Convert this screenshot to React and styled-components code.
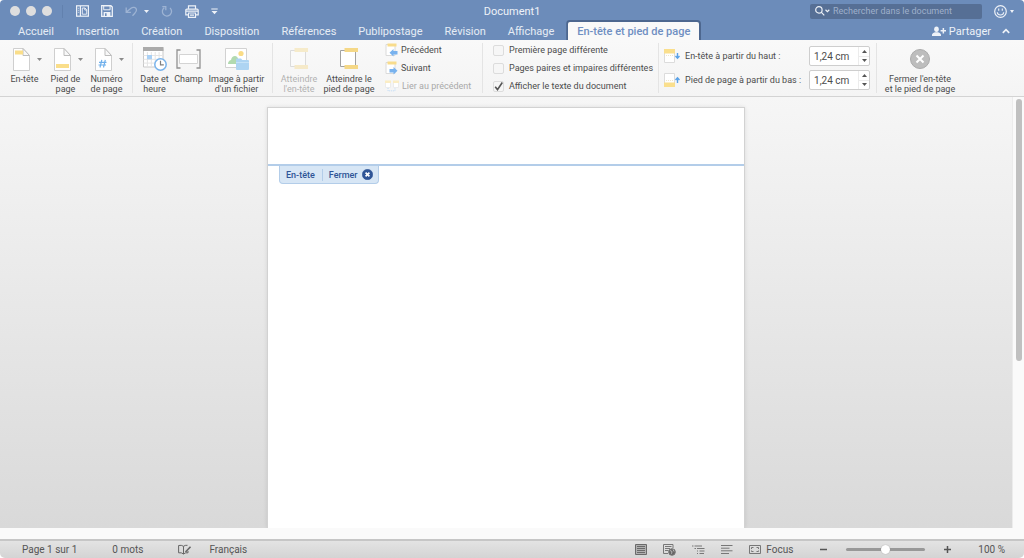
import React, { useState } from 'react';
import styled, { createGlobalStyle, css } from 'styled-components';

const sans = `Roboto, "Liberation Sans", sans-serif`;

const Global = createGlobalStyle`
  *, *::before, *::after { box-sizing: border-box; }
  body { margin: 0; background: #fff; font-family: ${sans}; }
  button, input { font: inherit; color: inherit; }
  button { border: 0; padding: 0; margin: 0; background: none; }
  svg { display: block; flex: none; }
`;

const Window = styled.div`
  display: flex;
  flex-direction: column;
  min-height: 100vh;
  border-radius: 4px 4px 5px 5px;
  overflow: hidden;
  background: #fafafa;
`;

/* ---------- Title bar ---------- */
const TitleBar = styled.header`
  display: grid;
  grid-template-columns: 1fr auto 1fr;
  align-items: center;
  height: 22px;
  background: #6c8cba;
  color: #eef2f8;
`;
const TitleLeft = styled.div`
  display: flex;
  align-items: center;
  padding-left: 10px;
`;
const Lights = styled.div`
  display: flex;
  gap: 6px;
  padding-right: 10px;
  margin-right: 13px;
  border-right: 1px solid #6281ae;
  height: 13px;
  align-items: center;
`;
const Light = styled.button`
  width: 10px;
  height: 10px;
  border-radius: 50%;
  background: #dedede;
`;
const QuickTools = styled.div`
  display: flex;
  align-items: center;
  gap: 12px;
`;
const ToolButton = styled.button`
  display: flex;
  align-items: center;
  gap: ${(p) => p.$gap || 0}px;
  color: ${(p) => (p.$dim ? '#9db3d3' : '#eef2f8')};
`;
const Title = styled.h1`
  margin: 0;
  padding-top: 2px;
  font-size: 11px;
  line-height: 14px;
  font-weight: 400;
`;
const TitleRight = styled.div`
  display: flex;
  align-items: center;
  justify-content: flex-end;
  gap: 12px;
  padding-right: 10px;
`;
const Search = styled.label`
  display: flex;
  align-items: center;
  gap: 3px;
  width: 172px;
  height: 15px;
  padding-left: 5px;
  border-radius: 2px;
  background: #566f95;
`;
const SearchInput = styled.input`
  flex: 1;
  min-width: 0;
  border: 0;
  padding: 0;
  outline: 0;
  background: none;
  font-size: 9px;
  line-height: 14px;
  &::placeholder { color: #9fb0cb; opacity: 1; }
`;

/* ---------- Tabs ---------- */
const TabBar = styled.nav`
  display: flex;
  align-items: stretch;
  height: 18px;
  padding: 0 14px 0 7px;
  background: #6c8cba;
  color: #e6ecf5;
`;
const Tab = styled.button`
  padding: 0 11px;
  font-size: 11px;
  line-height: 17px;
  white-space: nowrap;
  ${(p) => p.$active && css`
    margin-left: 3px;
    padding: 0 9px;
    background: #f9f9f9;
    color: #6f8fc2;
    font-weight: 500;
    border-radius: 2px 2px 0 0;
    box-shadow: 0 0 0 2px #4d678f;
    clip-path: inset(-2px -2px 0 -2px);
  `}
`;
const ShareArea = styled.div`
  display: flex;
  align-items: center;
  gap: 11px;
  margin-left: auto;
  font-size: 11px;
`;

/* ---------- Ribbon ---------- */
const Ribbon = styled.section`
  display: flex;
  height: 57px;
  padding: 3px 0;
  background: linear-gradient(#f9f9f9, #f4f4f4);
  border-bottom: 1px solid #d3d3d3;
  font-size: 9px;
  line-height: 10px;
  color: #4c4c4c;
`;
const Group = styled.div`
  display: flex;
  min-width: ${(p) => p.$w || 0}px;
  padding: ${(p) => p.$pad || '0 4px'};
  border-right: ${(p) => (p.$last ? 0 : '1px solid #e4e4e4')};
`;
const BigButton = styled.button`
  display: flex;
  flex-direction: column;
  align-items: center;
  justify-content: flex-start;
  gap: 3px;
  width: ${(p) => p.$w}px;
  padding-top: 4px;
  white-space: nowrap;
  opacity: ${(p) => (p.disabled ? 0.4 : 1)};
`;
const IconRow = styled.span`
  display: flex;
  flex: none;
  align-items: center;
  gap: 7px;
  height: 24px;
  padding-left: ${(p) => (p.$menu ? 5 : 0)}px;
`;
const Stack = styled.div`
  display: flex;
  flex-direction: column;
  gap: ${(p) => p.$gap}px;
  margin-left: ${(p) => p.$indent || 0}px;
`;
const SmallButton = styled.button`
  display: flex;
  align-items: center;
  gap: 3px;
  height: 14px;
  white-space: nowrap;
  color: ${(p) => (p.disabled ? '#a9a9a9' : '#4c4c4c')};
`;
const CheckLabel = styled.label`
  display: flex;
  align-items: center;
  gap: 5px;
  height: 14px;
  white-space: nowrap;
`;
const CheckWrap = styled.span`
  display: grid;
  width: 11px;
  height: 11px;
  & > * { grid-area: 1 / 1; }
`;
const CheckBox = styled.input`
  appearance: none;
  width: 11px;
  height: 11px;
  margin: 0;
  border: 1px solid #dcdcdc;
  border-radius: 2px;
  background: #f6f6f6;
  & + svg { visibility: hidden; pointer-events: none; }
  &:checked + svg { visibility: visible; }
`;
const MeasureRow = styled.div`
  display: flex;
  align-items: center;
  width: 206px;
  height: 20px;
  gap: 5px;
  white-space: nowrap;
`;
const Spin = styled.div`
  display: flex;
  width: 61px;
  height: 20px;
  margin-left: auto;
  border: 1px solid #cecece;
  border-radius: 2px;
  background: #fff;
`;
const SpinInput = styled.input`
  flex: 1;
  min-width: 0;
  border: 0;
  outline: 0;
  padding: 0 0 0 4px;
  background: none;
  font-size: 10px;
`;
const SpinArrows = styled.div`
  display: flex;
  flex-direction: column;
  width: 11px;
  border-left: 1px solid #ececec;
  & > button {
    flex: 1;
    display: grid;
    place-items: center;
  }
  & > button + button { border-top: 1px solid #ececec; }
`;

/* ---------- Document ---------- */
const Workspace = styled.main`
  display: flex;
  flex: 1;
`;
const Canvas = styled.div`
  display: flex;
  flex: 1;
  justify-content: center;
  padding-top: 10px;
  background: linear-gradient(#f6f6f6, #d9d9d9);
`;
const Page = styled.article`
  width: 478px;
  background: #fff;
  border: 1px solid #d2d2d2;
  border-bottom: 0;
  box-shadow: 0 0 4px rgba(0, 0, 0, 0.1);
`;
const HeaderZone = styled.div`
  height: 58px;
  border-bottom: 2px solid #b3cde9;
`;
const ZoneTag = styled.div`
  display: inline-flex;
  align-items: center;
  height: 18px;
  margin-left: 11px;
  padding: 0 5px 0 6px;
  border: 1px solid #b3cde9;
  border-top: 0;
  border-radius: 0 0 4px 4px;
  background: #d7e6f5;
  color: #2f5597;
  font-size: 9px;
  line-height: 12px;
  font-weight: 500;
  vertical-align: top;
`;
const ZoneClose = styled.button`
  display: flex;
  align-items: center;
  gap: 4px;
  margin-left: 7px;
  padding-left: 6px;
  border-left: 1px solid #b3cde9;
`;
const ScrollTrack = styled.div`
  width: 12px;
  padding: 2px 2px 0 3px;
  background: #fafafa;
  border-left: 1px solid #ececec;
`;
const ScrollThumb = styled.div`
  width: 6px;
  height: 61%;
  border-radius: 3px;
  background: #c0c0c0;
`;
const BottomGutter = styled.div`
  height: 11px;
  background: #fafafa;
`;

/* ---------- Status bar ---------- */
const StatusBar = styled.footer`
  display: flex;
  align-items: center;
  justify-content: space-between;
  height: 19px;
  padding: 0 19px 0 22px;
  border-top: 2px solid #c6c6c6;
  background: linear-gradient(#e3e3e3, #d4d4d4);
  color: #555;
  font-size: 10px;
  line-height: 14px;
`;
const StatusSide = styled.div`
  display: flex;
  align-items: center;
  gap: ${(p) => p.$gap}px;
`;
const StatusButton = styled.button`
  display: flex;
  align-items: center;
  gap: 5px;
  white-space: nowrap;
`;
const Zoom = styled.div`
  display: flex;
  align-items: center;
  gap: 19px;
  margin: 0 11px;
`;
const Range = styled.input`
  appearance: none;
  width: 79px;
  height: 10px;
  margin: 0;
  background: none;
  &::-webkit-slider-runnable-track {
    height: 3px;
    border-radius: 2px;
    background: #989898;
  }
  &::-webkit-slider-thumb {
    appearance: none;
    width: 9px;
    height: 9px;
    margin-top: -3px;
    border-radius: 50%;
    background: #fff;
    box-shadow: 0 0 1px #888;
  }
`;

/* ---------- Icons ---------- */
const Caret = ({ w = 5, h = 4, color = 'currentColor', up }) => (
  <svg width={w} height={h} viewBox="0 0 6 4" preserveAspectRatio="none" aria-hidden="true">
    <path d={up ? 'M0 4h6L3 0z' : 'M0 0h6L3 4z'} fill={color} />
  </svg>
);
const PanelIcon = () => (
  <svg width="13" height="12" viewBox="0 0 13 12" fill="none" stroke="currentColor">
    <rect x=".6" y=".8" width="11.8" height="10.4" strokeWidth="1.2" />
    <path d="M4.400 1v10" strokeWidth="1.200" />
    <path d="M1.800 3.300h1.400M1.800 5.300h1.400M1.800 7.300h1.400" strokeWidth=".7" />
    <path d="M6.300 3h2.700l1.700 1.700v4.500H6.300zM8.800 3v2h2" strokeWidth=".9" />
  </svg>
);
const SaveIcon = () => (
  <svg width="12" height="12" viewBox="0 0 12 12">
    <path d="M.7.7h9.2l1.4 1.4v9.2H.7z" fill="none" stroke="currentColor" strokeWidth="1.3" />
    <path d="M2.7.8h6.4v4H2.7z" fill="none" stroke="currentColor" />
    <path d="M2.6 7h6.8v4.4H2.6z" fill="currentColor" />
    <path d="M4 8.3h1.6v2.8H4z" fill="#6c8cba" />
  </svg>
);
const UndoIcon = () => (
  <svg width="13" height="11" viewBox="0 0 13 11" fill="none" stroke="currentColor" strokeWidth="1.3">
    <path d="M1.2 1.6v4.7h4.7M1.4 6.1 6 2.2c2-1.5 4.8-.9 5.4 1 .5 1.6-.2 2.7-1.6 4L7.500 9.800" />
  </svg>
);
const RedoIcon = () => (
  <svg width="12" height="12" viewBox="0 0 12 12" fill="none" stroke="currentColor" strokeWidth="1.3">
    <path d="M3.300 2.700A4.600 4.600 0 1 0 9 3M1.300 1.700h3.500v3.500" />
  </svg>
);
const PrintIcon = () => (
  <svg width="14" height="13" viewBox="0 0 14 13" fill="none" stroke="currentColor" strokeWidth="1.200">
    <path d="M3.500 4V.8h7V4M3.300 9.800H.8V5.300q0-1.100 1.100-1.100h10.200q1.100 0 1.100 1.100v4.500h-2.500M1 6.200h12" />
    <path d="M3.500 8h7v4.300h-7zM5 10.100h4" />
  </svg>
);
const MoreIcon = () => (
  <svg width="7" height="7" viewBox="0 0 7 7" fill="currentColor">
    <path d="M.3.500h6.400v1H.3zM.5 3h6L3.500 6.200z" />
  </svg>
);
const SearchIcon = () => (
  <svg width="15" height="10" viewBox="0 0 15 10" fill="none" stroke="currentColor" strokeWidth="1.200">
    <circle cx="3.900" cy="3.900" r="3.200" />
    <path d="m6.200 6.200 3.100 3.100M10.500 3.800l1.900 1.800 1.900-1.800" />
  </svg>
);
const SmileIcon = () => (
  <svg width="13" height="13" viewBox="0 0 13 13" fill="none" stroke="currentColor">
    <circle cx="6.500" cy="6.500" r="5.800" strokeWidth="1.200" />
    <path d="M3.300 7.300c.4 3.600 6 3.600 6.400 0M4.700 3.500v2.200M8.300 3.500v2.200" strokeWidth="1.100" />
  </svg>
);
const ShareIcon = () => (
  <svg width="14" height="11" viewBox="0 0 14 11" fill="currentColor">
    <ellipse cx="4.500" cy="3.200" rx="2.300" ry="2.700" />
    <path d="M0 10V8.600C.3 7.200 2 6.700 3.200 6.300h2.600C7 6.700 8.700 7.200 9 8.600V10zM10.600 2h1.500v2H14v1.500h-1.900v2h-1.500v-2h-2V4h2z" />
  </svg>
);
const ChevronUp = () => (
  <svg width="8" height="6" viewBox="0 0 8 6" fill="none" stroke="currentColor" strokeWidth="1.700">
    <path d="m.8 4.800 3.200-3.200 3.200 3.200" />
  </svg>
);
const DocIcon = ({ kind }) => (
  <svg width="17" height="23" viewBox="0 0 17 23">
    <path d="M.5.500h9.500l6.500 7v15H.5z" fill="#fff" stroke="#cfcfcf" />
    <path d="M10 .5v7h6.500z" fill="#f8f8f8" stroke="#bdbdbd" />
    {kind === 'top' && <path d="M2 2.500h8v4H2z" fill="#fade8a" />}
    {kind === 'bottom' && <path d="M2 16h13v4H2z" fill="#fade8a" />}
    {kind === 'number' && <path d="M6.800 11.800 5 19.500M10.300 11.800 8.500 19.500M4 14.300h7.500M3.500 17h7.500" stroke="#6fb0ec" strokeWidth="1.200" />}
  </svg>
);
const DateIcon = () => (
  <svg width="24" height="24" viewBox="0 0 24 24">
    <path d="M.5 1.500h19.500V20H.5z" fill="#fff" stroke="#c9c9c9" />
    <path d="M.5 8.500H20M.5 12.300H20M.5 16.100H20M4.400 5v15M8.300 5v15M12.200 5v15M16.100 5v15" stroke="#e4e4e4" />
    <path d="M0 0h20.500v4H0z" fill="#aaa" />
    <path d="M4 8h5v4.300H4z" fill="#a9d0f5" />
    <circle cx="17.500" cy="17.500" r="5.700" fill="#fff" stroke="#78b3ec" strokeWidth="1.500" />
    <path d="M17.500 13.800v4h3.300" fill="none" stroke="#808080" strokeWidth="1.200" />
  </svg>
);
const FieldIcon = () => (
  <svg width="25" height="20" viewBox="0 0 25 20" fill="none">
    <path d="M4.500 1H1v18h3.500M20.500 1H24v18h-3.500" stroke="#919191" strokeWidth="1.300" />
    <path d="M3.500 5.500h18v9h-18z" fill="#fff" stroke="#d4d4d4" />
  </svg>
);
const ImageIcon = () => (
  <svg width="24" height="22" viewBox="0 0 24 22">
    <path d="M.5.500h21v19H.5z" fill="#fff" stroke="#d2d2d2" />
    <circle cx="16" cy="5.500" r="2.600" fill="#fadc86" />
    <path d="M3 16c0-2 1-3.500 3-4 .5-2.500 2-4 4-4 1.500 0 2.500 1 3 2.500V16z" fill="#b2dab0" />
    <path d="M11 11.500q0-1 1-1h4l1.300 1.500H23q1 0 1 1v8q0 1-1 1H12q-1 0-1-1z" fill="#add4f2" />
    <path d="M11 14h13v1H11z" fill="#c5e2f7" />
  </svg>
);
const GotoIcon = ({ footer }) => (
  <svg width="18" height="22" viewBox="0 0 18 22">
    <path d="M.5 2.500h15v16H.5z" fill="#fff" stroke={footer ? '#a2a2a2' : '#b4b4b4'} />
    <path d="M4.500 0H18v4H4.500zM4.500 17H18v4H4.500z" fill="#f5d887" />
  </svg>
);
const StepIcon = ({ next }) => (
  <svg width="13" height="14" viewBox="0 0 13 14">
    <path d="M1 1.500h9v11H1z" fill="#fff" stroke="#dadada" />
    <path d="M2.500.500h9v3h-9z" fill="#f8dc8c" />
    <path d={next ? 'M4.500 8h4V6l4 3.700-4 3.700v-2h-4z' : 'M12.500 8h-4V6L4.500 9.700l4 3.700v-2h4z'} fill="#78b2ee" />
  </svg>
);
const LinkIcon = () => (
  <svg width="14" height="12" viewBox="0 0 14 12">
    <path d="M.5 1.500h5v6h-5zM8.500 1.500h5v6h-5z" fill="#fff" stroke="#ececec" />
    <path d="M0 .5h6v2.500H0zM8 .5h6v2.500H8z" fill="#fbedc4" />
    <path d="M3 8v2.800h7V8" fill="none" stroke="#bcdaf6" strokeDasharray="1 1" />
  </svg>
);
const MarginIcon = ({ up }) => (
  <svg width="16" height="14" viewBox="0 0 16 14">
    <path d="M.5.500h10v13H.5z" fill="#fff" stroke="#dcdcdc" />
    <path d={up ? 'M0 9.500h11V14H0z' : 'M0 0h11v4.500H0z'} fill="#fadf8d" />
    <path d={up ? 'M2 7.500h7' : 'M2 6.500h7'} stroke="#f0e6c8" strokeDasharray="1 1" />
    <path d={up ? 'M13.500 10V5M11.500 7l2-2.300 2 2.300' : 'M13.500 4v5M11.500 7l2 2.300 2-2.300'} fill="none" stroke="#5aa2e8" strokeWidth="1.400" />
  </svg>
);
const CheckMark = () => (
  <svg width="11" height="11" viewBox="0 0 11 11">
    <path d="m2.200 5.800 2.300 2.800L9.300 1.500" fill="none" stroke="#555" strokeWidth="1.600" />
  </svg>
);
const CloseIcon = ({ size, bg, ring }) => (
  <svg width={size} height={size} viewBox="0 0 20 20">
    <circle cx="10" cy="10" r="9.500" fill={bg} stroke={ring || bg} />
    <path d="m6.500 6.500 7 7m0-7-7 7" stroke="#fff" strokeWidth={size > 15 ? 2 : 3} />
  </svg>
);
const ProofIcon = () => (
  <svg width="14" height="12" viewBox="0 0 14 12" fill="none" stroke="#666">
    <path d="M5.500 2.300Q3.500.800.6 1.500v7.300q3-.5 4.900 1.200Q7.500 8.300 10 8.800V7M5.500 2.300V10M5.500 2.300Q7 1 9.500 1.300" />
    <path d="m7.500 8 5-5.300" strokeWidth="1.600" />
  </svg>
);
const PrintLayoutIcon = () => (
  <svg width="12" height="11" viewBox="0 0 12 11" fill="none" stroke="#6a6a6a">
    <path d="M.5.500h11v10H.5z" fill="#b0b0b0" />
    <path d="M2 2.500h8M2 4.500h8M2 6.500h8M2 8.500h8" />
  </svg>
);
const WebLayoutIcon = () => (
  <svg width="13" height="12" viewBox="0 0 13 12" fill="none" stroke="#777">
    <path d="M.5 9.500v-9h9.500v3.500M.5 9.500H5M2 2.500h6.500M2 4.500h5M2 6.500h3.500" />
    <circle cx="9" cy="8" r="3.300" fill="#666" />
    <path d="M7 6.500 9 7.500l-.5 2.300M10 5.500l1 2" stroke="#ccc" strokeWidth=".8" />
  </svg>
);
const OutlineIcon = () => (
  <svg width="13" height="10" viewBox="0 0 13 10" stroke="#777">
    <path d="M0 1h1.500M2.500 1H10M2.500 3.500H4M5 3.500h7.500M5 6h1M7.500 6h5M5 8.500h1M7.500 8.500h4.500" />
  </svg>
);
const DraftIcon = () => (
  <svg width="12" height="9" viewBox="0 0 12 9" stroke="#777">
    <path d="M0 .500h11.500M0 3.200h8.500M0 5.800h11.500M0 8.500h8" />
  </svg>
);
const FocusIcon = () => (
  <svg width="12" height="9" viewBox="0 0 12 9" fill="none" stroke="#777">
    <path d="M.5.500h11v8H.5z" />
    <path d="M2.500 4V2.500h2M7.500 2.500h2V4M9.500 5.500v1h-2M4.500 6.500h-2v-1" />
  </svg>
);
const SignIcon = ({ plus }) => (
  <svg width="7" height="7" viewBox="0 0 7 7" stroke="#555" strokeWidth="1.500">
    <path d={plus ? 'M0 3.500h7M3.500 0v7' : 'M0 3.500h7'} />
  </svg>
);

/* ---------- Composite controls ---------- */
const RibbonButton = ({ icon, lines, width, menu, disabled }) => (
  <BigButton $w={width} disabled={disabled}>
    <IconRow $menu={menu}>
      {icon}
      {menu && <Caret h={3} color="#8a8a8a" />}
    </IconRow>
    <span>
      {lines.map((l, i) => (
        <React.Fragment key={l}>{i > 0 && <br />}{l}</React.Fragment>
      ))}
    </span>
  </BigButton>
);

const Option = ({ label, checked }) => (
  <CheckLabel>
    <CheckWrap>
      <CheckBox type="checkbox" defaultChecked={checked} />
      <CheckMark />
    </CheckWrap>
    {label}
  </CheckLabel>
);

const Measure = ({ id, label, up }) => {
  const [value, setValue] = useState(124);
  const text = `${(value / 100).toFixed(2).replace('.', ',')} cm`;
  return (
    <MeasureRow>
      <MarginIcon up={up} />
      <label htmlFor={id}>{label}</label>
      <Spin>
        <SpinInput id={id} type="text" value={text} readOnly />
        <SpinArrows>
          <button aria-label="Augmenter" onClick={() => setValue(value + 10)}><Caret up h={3} color="#555" /></button>
          <button aria-label="Diminuer" onClick={() => setValue(Math.max(0, value - 10))}><Caret h={3} color="#555" /></button>
        </SpinArrows>
      </Spin>
    </MeasureRow>
  );
};

const tabs = ['Accueil', 'Insertion', 'Création', 'Disposition', 'Références', 'Publipostage', 'Révision', 'Affichage', 'En-tête et pied de page'];

export default function App() {
  return (
    <>
      <Global />
      <Window>
        <TitleBar>
          <TitleLeft>
            <Lights>
              <Light aria-label="Fermer la fenêtre" />
              <Light aria-label="Réduire" />
              <Light aria-label="Agrandir" />
            </Lights>
            <QuickTools>
              <ToolButton aria-label="Volet"><PanelIcon /></ToolButton>
              <ToolButton aria-label="Enregistrer"><SaveIcon /></ToolButton>
              <ToolButton aria-label="Annuler" $dim $gap={6}><UndoIcon /><Caret h={3} color="#eef2f8" /></ToolButton>
              <ToolButton aria-label="Rétablir" $dim><RedoIcon /></ToolButton>
              <ToolButton aria-label="Imprimer"><PrintIcon /></ToolButton>
              <ToolButton aria-label="Personnaliser"><MoreIcon /></ToolButton>
            </QuickTools>
          </TitleLeft>
          <Title>Document1</Title>
          <TitleRight>
            <Search>
              <SearchIcon />
              <SearchInput type="text" placeholder="Rechercher dans le document" aria-label="Rechercher dans le document" />
            </Search>
            <ToolButton aria-label="Commentaires" $gap={3}><SmileIcon /><Caret w={4} h={3} /></ToolButton>
          </TitleRight>
        </TitleBar>

        <TabBar>
          {tabs.map((t, i) => <Tab key={t} $active={i === tabs.length - 1}>{t}</Tab>)}
          <ShareArea>
            <ToolButton $gap={3}><ShareIcon />Partager</ToolButton>
            <ToolButton aria-label="Réduire le ruban"><ChevronUp /></ToolButton>
          </ShareArea>
        </TabBar>

        <Ribbon>
          <Group $w={133} $pad="0 5px 0 4px">
            <RibbonButton width={41} menu icon={<DocIcon kind="top" />} lines={['En-tête']} />
            <RibbonButton width={41} menu icon={<DocIcon kind="bottom" />} lines={['Pied de', 'page']} />
            <RibbonButton width={41} menu icon={<DocIcon kind="number" />} lines={['Numéro', 'de page']} />
          </Group>
          <Group $w={140} $pad="0 4px">
            <RibbonButton width={35} icon={<DateIcon />} lines={['Date et', 'heure']} />
            <RibbonButton width={33} icon={<FieldIcon />} lines={['Champ']} />
            <RibbonButton width={63} icon={<ImageIcon />} lines={['Image à partir', "d'un fichier"]} />
          </Group>
          <Group $w={210} $pad="0 4px">
            <RibbonButton width={44} disabled icon={<GotoIcon />} lines={['Atteindre', "l'en-tête"]} />
            <RibbonButton width={56} icon={<GotoIcon footer />} lines={['Atteindre le', 'pied de page']} />
            <Stack $gap={4} $indent={8}>
              <SmallButton><StepIcon />Précédent</SmallButton>
              <SmallButton><StepIcon next />Suivant</SmallButton>
              <SmallButton disabled><LinkIcon />Lier au précédent</SmallButton>
            </Stack>
          </Group>
          <Group $w={176} $pad="0 5px 0 10px">
            <Stack $gap={4}>
              <Option label="Première page différente" />
              <Option label="Pages paires et impaires différentes" />
              <Option label="Afficher le texte du document" checked />
            </Stack>
          </Group>
          <Group $w={218} $pad="3px 5px">
            <Stack $gap={4}>
              <Measure id="top" label="En-tête à partir du haut :" />
              <Measure id="bottom" label="Pied de page à partir du bas :" up />
            </Stack>
          </Group>
          <Group $pad="0 4px" $last>
            <RibbonButton width={78} icon={<CloseIcon size={20} bg="#bdbdbd" ring="#ababab" />} lines={["Fermer l'en-tête", 'et le pied de page']} />
          </Group>
        </Ribbon>

        <Workspace>
          <Canvas>
            <Page>
              <HeaderZone />
              <ZoneTag>
                En-tête
                <ZoneClose>Fermer<CloseIcon size={11} bg="#2f5597" /></ZoneClose>
              </ZoneTag>
            </Page>
          </Canvas>
          <ScrollTrack><ScrollThumb /></ScrollTrack>
        </Workspace>
        <BottomGutter />

        <StatusBar>
          <StatusSide $gap={35}>
            <span>Page 1 sur 1</span>
            <span>0 mots</span>
            <StatusSide $gap={17}>
              <StatusButton aria-label="Vérification"><ProofIcon /></StatusButton>
              <StatusButton>Français</StatusButton>
            </StatusSide>
          </StatusSide>
          <StatusSide $gap={16}>
            <StatusButton aria-label="Page"><PrintLayoutIcon /></StatusButton>
            <StatusButton aria-label="Web"><WebLayoutIcon /></StatusButton>
            <StatusButton aria-label="Plan"><OutlineIcon /></StatusButton>
            <StatusButton aria-label="Brouillon"><DraftIcon /></StatusButton>
            <StatusButton><FocusIcon />Focus</StatusButton>
            <Zoom>
              <StatusButton aria-label="Zoom arrière"><SignIcon /></StatusButton>
              <Range type="range" aria-label="Zoom" defaultValue="50" />
              <StatusButton aria-label="Zoom avant"><SignIcon plus /></StatusButton>
            </Zoom>
            <span>100 %</span>
          </StatusSide>
        </StatusBar>
      </Window>
    </>
  );
}
